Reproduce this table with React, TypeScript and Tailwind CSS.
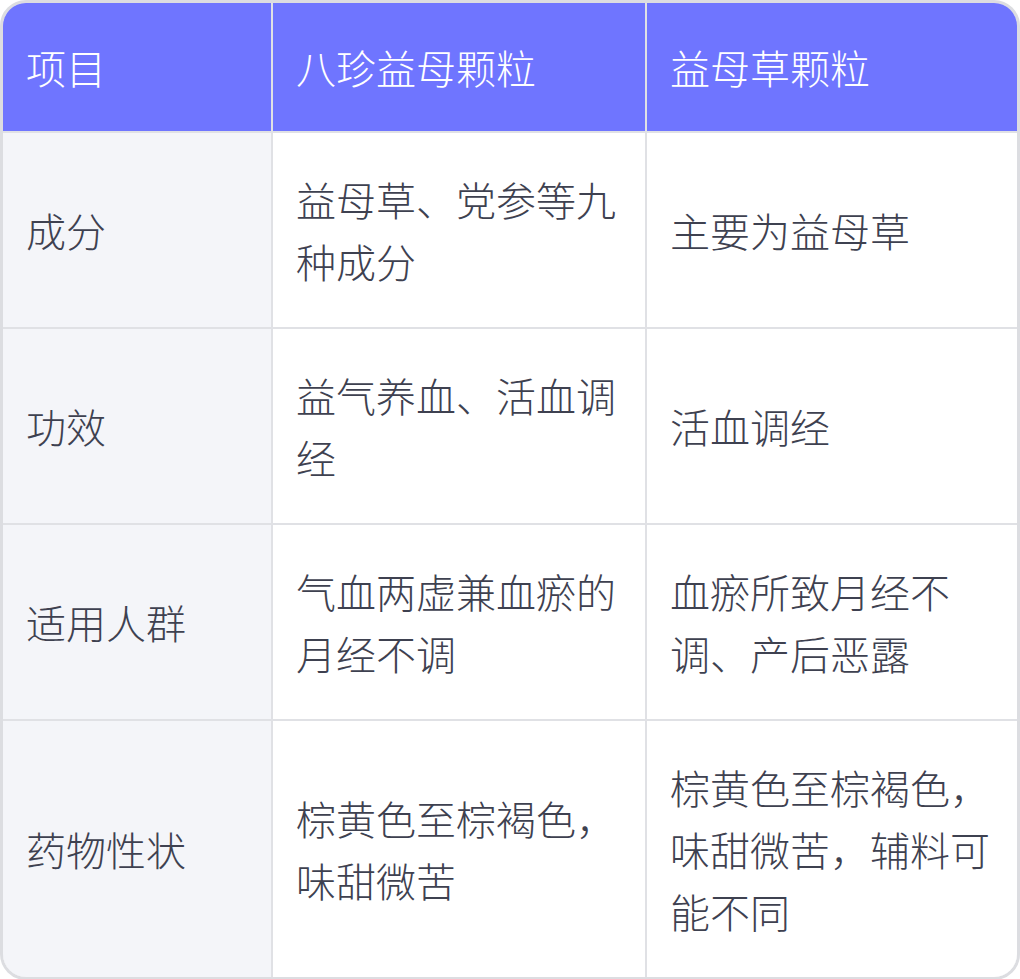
const header = ['项目', '八珍益母颗粒', '益母草颗粒'];

const rows = [
  ['成分', '益母草、党参等九种成分', '主要为益母草'],
  ['功效', '益气养血、活血调经', '活血调经'],
  ['适用人群', '气血两虚兼血瘀的月经不调', '血瘀所致月经不调、产后恶露'],
  ['药物性状', '棕黄色至棕褐色，味甜微苦', '棕黄色至棕褐色，味甜微苦，辅料可能不同'],
];

export default function App() {
  return (
    <div
      className="w-[1020px] h-[979px] bg-white"
      style={{ fontFamily: '"Noto Sans CJK SC", "Noto Sans", sans-serif' }}
    >
      <div className="border-[3px] border-[#dcdde1] rounded-[26px] overflow-hidden">
        <div className="grid grid-cols-[268px_372px_1fr] gap-[2px] bg-[#e0e1e5] text-[40px] leading-[62px] font-light">
          {/* Header */}
          {header.map((h) => (
            <div key={h} className="bg-[#6f75ff] text-white px-[23px] py-[33px]">
              {h}
            </div>
          ))}

          {/* Body */}
          {rows.map((r) =>
            r.map((cell, i) => (
              <div
                key={r[0] + i}
                className={`flex items-center px-[23px] py-[35px] text-[#3e4150] ${
                  i === 0 ? 'bg-[#f4f5f9]' : 'bg-white'
                }`}
              >
                <span>{cell}</span>
              </div>
            ))
          )}
        </div>
      </div>
    </div>
  );
}
